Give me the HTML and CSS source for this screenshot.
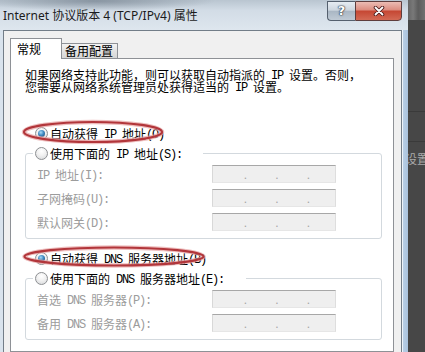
FILE: index.html
```html
<!DOCTYPE html>
<html lang="zh-CN">
<head>
<meta charset="utf-8">
<title>Internet 协议版本 4 (TCP/IPv4) 属性</title>
<link rel="stylesheet" href="styles.css">
</head>
<body>
<div class="desktop">
  <div class="window">
    <div class="titlebar">
      <span class="title">Internet 协议版本 4 (TCP/IPv4) 属性</span>
      <div class="caption-buttons">
        <span class="cbtn help">?</span>
        <span class="cbtn close"><svg width="12" height="10" viewBox="0 0 12 10"><path d="M2.5 1.5 L9.5 8.5 M9.5 1.5 L2.5 8.5" stroke="#4a1c1c" stroke-width="3.6" stroke-linecap="round"/><path d="M2.5 1.5 L9.5 8.5 M9.5 1.5 L2.5 8.5" stroke="#ffffff" stroke-width="1.8" stroke-linecap="round"/></svg></span>
      </div>
    </div>
    <div class="client">
      <div class="tabs">
        <span class="tab active">常规</span>
        <span class="tab">备用配置</span>
      </div>
      <div class="panel">
        <p class="desc">如果网络支持此功能，则可以获取自动指派的<span class="m"> IP </span>设置。否则，<br>您需要从网络系统管理员处获得适当的<span class="m"> IP </span>设置。</p>

        <div class="radio-row first">
          <span class="radio on"></span>
          <span>自动获得<span class="m"> IP </span>地址<span class="m">(O)</span></span>
          <svg class="mark" width="150" height="30" viewBox="0 0 150 30"><ellipse cx="74" cy="15" rx="69" ry="10" fill="none" stroke="#e7a3a3" stroke-opacity="0.7" stroke-width="4.5"/><ellipse cx="74" cy="15" rx="69" ry="10" fill="none" stroke="#b2363b" stroke-width="2.2"/></svg>
        </div>

        <fieldset class="group">
          <legend class="radio-legend legend1"><span class="radio"></span><span>使用下面的<span class="m"> IP </span>地址<span class="m">(S):</span></span></legend>
          <div class="fields">
            <div class="field"><span class="lbl"><span class="m">IP </span>地址<span class="m">(I):</span></span><span class="ip"><i></i><b>.</b><i></i><b>.</b><i></i><b>.</b><i></i></span></div>
            <div class="field"><span class="lbl">子网掩码<span class="m">(U):</span></span><span class="ip"><i></i><b>.</b><i></i><b>.</b><i></i><b>.</b><i></i></span></div>
            <div class="field"><span class="lbl">默认网关<span class="m">(D):</span></span><span class="ip"><i></i><b>.</b><i></i><b>.</b><i></i><b>.</b><i></i></span></div>
          </div>
        </fieldset>

        <div class="radio-row second">
          <span class="radio on"></span>
          <span>自动获得<span class="m"> DNS </span>服务器地址<span class="m">(B)</span></span>
          <svg class="mark" width="195" height="30" viewBox="0 0 195 30"><ellipse cx="95" cy="14.5" rx="89.5" ry="9" fill="none" stroke="#e7a3a3" stroke-opacity="0.7" stroke-width="4.5"/><ellipse cx="95" cy="14.5" rx="89.5" ry="9" fill="none" stroke="#b2363b" stroke-width="2.2"/></svg>
        </div>

        <fieldset class="group">
          <legend class="radio-legend legend2"><span class="radio"></span><span>使用下面的<span class="m"> DNS </span>服务器地址<span class="m">(E):</span></span></legend>
          <div class="fields">
            <div class="field"><span class="lbl">首选<span class="m"> DNS </span>服务器<span class="m">(P):</span></span><span class="ip"><i></i><b>.</b><i></i><b>.</b><i></i><b>.</b><i></i></span></div>
            <div class="field"><span class="lbl">备用<span class="m"> DNS </span>服务器<span class="m">(A):</span></span><span class="ip"><i></i><b>.</b><i></i><b>.</b><i></i><b>.</b><i></i></span></div>
          </div>
        </fieldset>
      </div>
    </div>
  </div>
  <div class="behind">
    <div class="bh-top"></div>
    <div class="bh-row r1"></div>
    <div class="bh-row r2"></div>
    <div class="bh-text">设置</div>
  </div>
</div>
</body>
</html>
```

FILE: styles.css
```css
* { box-sizing: border-box; }
html, body { margin: 0; padding: 0; }
body {
  width: 425px;
  height: 352px;
  overflow: hidden;
  background: #464646;
  font-family: "Noto Sans CJK SC", "Noto Sans", sans-serif;
  font-size: 12px;
  color: #000;
}
.desktop {
  display: flex;
  width: 425px;
  height: 352px;
  overflow: hidden;
}
.window {
  width: 408px;
  flex: none;
  display: flex;
  flex-direction: column;
  background: linear-gradient(90deg, #d9e3ed 0, #d9e3ed 3px, #f0f0f0 3px, #f0f0f0 402px, #eef4fa 402px, #eef4fa 403px, #b9cfe6 403px, #a9c2dd 408px);
}
.titlebar {
  height: 30px;
  flex: none;
  display: flex;
  align-items: flex-start;
  background:
    radial-gradient(ellipse 120px 10px at 95px 1px, rgba(95,108,122,0.55), rgba(95,108,122,0)),
    linear-gradient(180deg, #b9c5d0 0, #d2dce6 35%, #dee6ee 100%);
}
.title {
  padding: 8px 0 0 3px;
  font-family: "Noto Sans", "Noto Sans CJK SC", sans-serif;
  font-size: 12px;
  line-height: 16px;
  color: #1b1b1b;
  white-space: nowrap;
}
.caption-buttons {
  margin-left: auto;
  margin-right: 6px;
  margin-top: 1px;
  display: flex;
}
.cbtn {
  height: 20px;
  display: flex;
  align-items: center;
  justify-content: center;
  border: 1px solid #55606e;
}
.help {
  width: 28px;
  border-right: none;
  border-radius: 0 0 0 4px;
  background: linear-gradient(180deg, #e6ecf2 0, #cdd6df 45%, #aab7c4 52%, #bfcad5 100%);
  font-family: "DejaVu Sans", sans-serif;
  font-weight: bold;
  font-size: 13px;
  line-height: 14px;
  color: #ffffff;
  text-shadow: 0 0 1px #2c3743, 0 0 1px #2c3743, 0 0 2px #2c3743;
}
.close {
  width: 47px;
  border-color: #5e3d3d;
  border-radius: 0 0 4px 0;
  background: linear-gradient(180deg, #ebbcb4 0, #dd8f82 42%, #c64834 52%, #d36a55 100%);
}
.client {
  flex: 1;
  margin: 0 6px 0 3px;
  border: 1px solid #727d88;
  border-bottom: none;
  background: #f0f0f0;
  padding: 0 7px 0 6px;
  display: flex;
  flex-direction: column;
}
.tabs {
  height: 27px;
  flex: none;
  display: flex;
  align-items: flex-end;
}
.tab {
  border: 1px solid #8e9196;
  border-bottom: none;
  line-height: 14px;
  white-space: nowrap;
}
.tab.active {
  position: relative;
  z-index: 1;
  height: 21px;
  margin-bottom: -1px;
  padding: 3px 20px 0 6px;
  background: #ffffff;
}
.tab:not(.active) {
  height: 15px;
  margin-left: -1px;
  padding: 0 4px 0 3px;
  background: linear-gradient(180deg, #f3f3f3 0, #e3e3e3 50%, #d6d6d6 100%);
}
.panel {
  flex: 1;
  border: 1px solid #8e9196;
  background: #ffffff;
  padding: 10px 11px 0 14px;
}
.desc {
  margin: 0;
  line-height: 12px;
  white-space: nowrap;
}
.m {
  font-family: "Liberation Mono", monospace;
  font-size: 12px;
  letter-spacing: -1.2px;
  line-height: 10px;
  vertical-align: 1px;
}
.radio-row {
  position: relative;
  display: flex;
  align-items: center;
  gap: 2px;
  height: 20px;
  margin-left: 8px;
  padding-left: 2px;
  white-space: nowrap;
}
.radio-row.first { margin-top: 30px; }
.radio-row.second { margin-top: 9px; }
.radio {
  position: relative;
  flex: none;
  width: 13px;
  height: 13px;
  border-radius: 50%;
  border: 1px solid #8d8f92;
  background: radial-gradient(circle at 50% 30%, #ffffff 0, #f1f1f1 45%, #d4d6d8 100%);
}
.radio.on::after {
  content: "";
  position: absolute;
  left: 2px;
  top: 2px;
  width: 7px;
  height: 7px;
  border-radius: 50%;
  background: radial-gradient(circle at 40% 35%, #a9daf7 0, #3f8ac2 45%, #1b456f 100%);
}
.mark {
  position: absolute;
  left: -14px;
  top: -6px;
  pointer-events: none;
}
.group {
  margin: 0;
  min-width: 0;
  padding: 0 0 4px 0;
  border: 1px solid #d3d9de;
  border-radius: 3px;
}
.radio-legend {
  margin-left: 7px;
  padding: 0 21px 0 2px;
  height: 20px;
  display: flex;
  align-items: center;
  gap: 2px;
  white-space: nowrap;
}
.legend2 { padding-right: 22px; }
.fields {
  margin-top: -1px;
}
.field {
  display: grid;
  grid-template-columns: 175px 124px;
  align-items: center;
  height: 24px;
  padding-left: 11px;
}
.lbl {
  color: #9c9c9c;
  white-space: nowrap;
}
.ip {
  height: 18px;
  display: flex;
  align-items: flex-end;
  padding-left: 3px;
  background: #efefef;
  border: 1px solid;
  border-color: #a7a7a7 #dedede #e6e6e6 #d8d8d8;
}
.ip i {
  width: 27.5px;
  flex: none;
}
.ip b {
  width: 4px;
  flex: none;
  text-align: center;
  font-weight: normal;
  font-family: "Liberation Sans", sans-serif;
  font-size: 12px;
  line-height: 14px;
  color: #a5a5a5;
}
.behind {
  flex: 1;
  display: flex;
  flex-direction: column;
  overflow: hidden;
  background: #474747;
}
.bh-top {
  height: 20px;
  background: linear-gradient(90deg, #7a7a7a 0, #9a9a9a 30%, #6a6a6a 60%, #8c8c8c 100%);
  opacity: 0.6;
}
.bh-row {
  border-bottom: 1px solid #3a3a3a;
}
.bh-row.r1 { height: 92px; }
.bh-row.r2 { height: 30px; }
.bh-text {
  margin-top: 10px;
  margin-left: -3px;
  font-size: 12px;
  line-height: 13px;
  color: #a9a9a9;
  white-space: nowrap;
}
```
